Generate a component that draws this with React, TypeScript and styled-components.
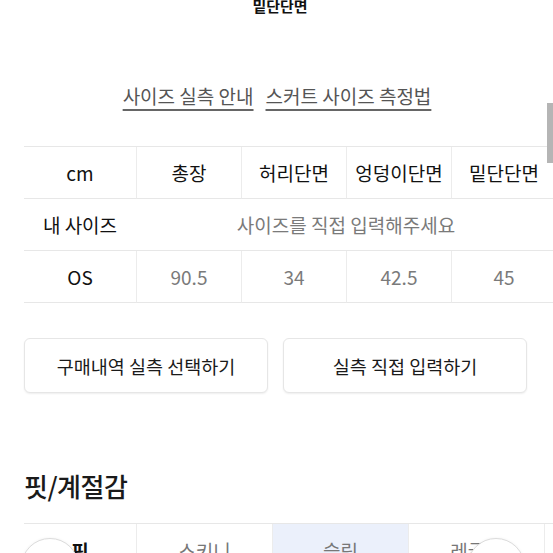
import React from 'react'
import styled, { createGlobalStyle } from 'styled-components'

const GlobalStyle = createGlobalStyle`
  html, body {
    margin: 0;
    padding: 0;
    background: #ffffff;
    overflow: hidden;
  }
  body {
    font-family: "Noto Sans CJK KR", "Noto Sans", sans-serif;
    color: #111;
  }
`

const Page = styled.div`
  position: relative;
  width: 553px;
  height: 553px;
  overflow: hidden;
  padding-left: 24px;
  box-sizing: border-box;
`

const Scrollbar = styled.div`
  position: absolute;
  right: 0;
  top: 103px;
  width: 6px;
  height: 60px;
  background: #b5b5b5;
`

const TopTitle = styled.div`
  width: 512px;
  margin-top: -4px;
  text-align: center;
  font-size: 15px;
  font-weight: 700;
  line-height: 20px;
  color: #111;
`

const LinkRow = styled.div`
  width: 506px;
  margin-top: 68px;
  display: flex;
  justify-content: center;
  gap: 12px;
  line-height: 24px;
`

const GuideLink = styled.a`
  font-size: 19px;
  color: #555;
  text-decoration: underline;
  text-decoration-thickness: 2px;
  text-underline-offset: 5px;
  text-decoration-color: #666;
`

const SizeTable = styled.div`
  margin-top: 38px;
  display: grid;
  grid-template-columns: 112px repeat(4, 105px);
  border-top: 1px solid #e7e7e7;
`

const Cell = styled.div<{ $span?: number; $divider?: boolean; $muted?: boolean }>`
  height: 51px;
  display: flex;
  align-items: center;
  justify-content: center;
  border-bottom: 1px solid #e7e7e7;
  border-left: ${({ $divider }) => ($divider ? '1px solid #ececec' : 'none')};
  grid-column: ${({ $span }) => ($span ? `span ${$span}` : 'auto')};
  font-size: 19px;
  color: ${({ $muted }) => ($muted ? '#7a7a7a' : '#111')};
  white-space: nowrap;
`

const ButtonRow = styled.div`
  margin-top: 35px;
  display: flex;
  gap: 15px;
  width: 503px;
`

const ActionButton = styled.button`
  flex: 1;
  height: 55px;
  background: #fff;
  border: 1px solid #e6e6e6;
  border-radius: 6px;
  box-shadow: 0 1px 2px rgba(0, 0, 0, 0.07);
  font-family: "Noto Sans CJK KR", "Noto Sans", sans-serif;
  font-size: 18.5px;
  color: #1a1a1a;
  cursor: pointer;
`

const SectionTitle = styled.h2`
  margin: 76px 0 0;
  font-size: 26px;
  font-weight: 500;
  line-height: 34px;
  color: #1a1a1a;
  letter-spacing: -0.5px;
`

const FitWrap = styled.div`
  position: relative;
  margin-top: 20px;
`

const FitTable = styled.div`
  display: grid;
  grid-template-columns: 112px repeat(3, 136px) 60px;
  border-top: 1px solid #e7e7e7;
`

const FitCell = styled.div<{ $active?: boolean; $head?: boolean }>`
  height: 52px;
  display: flex;
  justify-content: center;
  padding-top: 13px;
  box-sizing: border-box;
  border-left: ${({ $head }) => ($head ? 'none' : '1px solid #ececec')};
  background: ${({ $active }) => ($active ? '#ebf0fb' : 'transparent')};
  font-size: 19px;
  font-weight: ${({ $head }) => ($head ? 700 : 400)};
  color: ${({ $head }) => ($head ? '#111' : '#777')};
  white-space: nowrap;
`

const NavCircle = styled.div<{ $left: number }>`
  position: absolute;
  top: 15px;
  left: ${({ $left }) => $left}px;
  width: 56px;
  height: 56px;
  border-radius: 50%;
  background: #fff;
  border: 1px solid #dcdcdc;
  box-shadow: 0 0 3px rgba(0, 0, 0, 0.06);
`

const headers = ['총장', '허리단면', '엉덩이단면', '밑단단면']
const values = ['90.5', '34', '42.5', '45']

export default function App() {
  return (
    <Page>
      <GlobalStyle />
      <TopTitle>밑단단면</TopTitle>
      <LinkRow>
        <GuideLink>사이즈 실측 안내</GuideLink>
        <GuideLink>스커트 사이즈 측정법</GuideLink>
      </LinkRow>
      <SizeTable>
        <Cell>cm</Cell>
        {headers.map((h) => (
          <Cell key={h} $divider>
            {h}
          </Cell>
        ))}
        <Cell>내 사이즈</Cell>
        <Cell $span={4} $muted>
          사이즈를 직접 입력해주세요
        </Cell>
        <Cell>OS</Cell>
        {values.map((v) => (
          <Cell key={v} $divider $muted>
            {v}
          </Cell>
        ))}
      </SizeTable>
      <ButtonRow>
        <ActionButton>구매내역 실측 선택하기</ActionButton>
        <ActionButton>실측 직접 입력하기</ActionButton>
      </ButtonRow>
      <SectionTitle>핏/계절감</SectionTitle>
      <FitWrap>
        <FitTable>
          <FitCell $head>핏</FitCell>
          <FitCell>스키니</FitCell>
          <FitCell $active>슬림</FitCell>
          <FitCell>레귤러</FitCell>
          <FitCell>루즈</FitCell>
        </FitTable>
        <NavCircle $left={-3} />
        <NavCircle $left={443} />
      </FitWrap>
      <Scrollbar />
    </Page>
  )
}
